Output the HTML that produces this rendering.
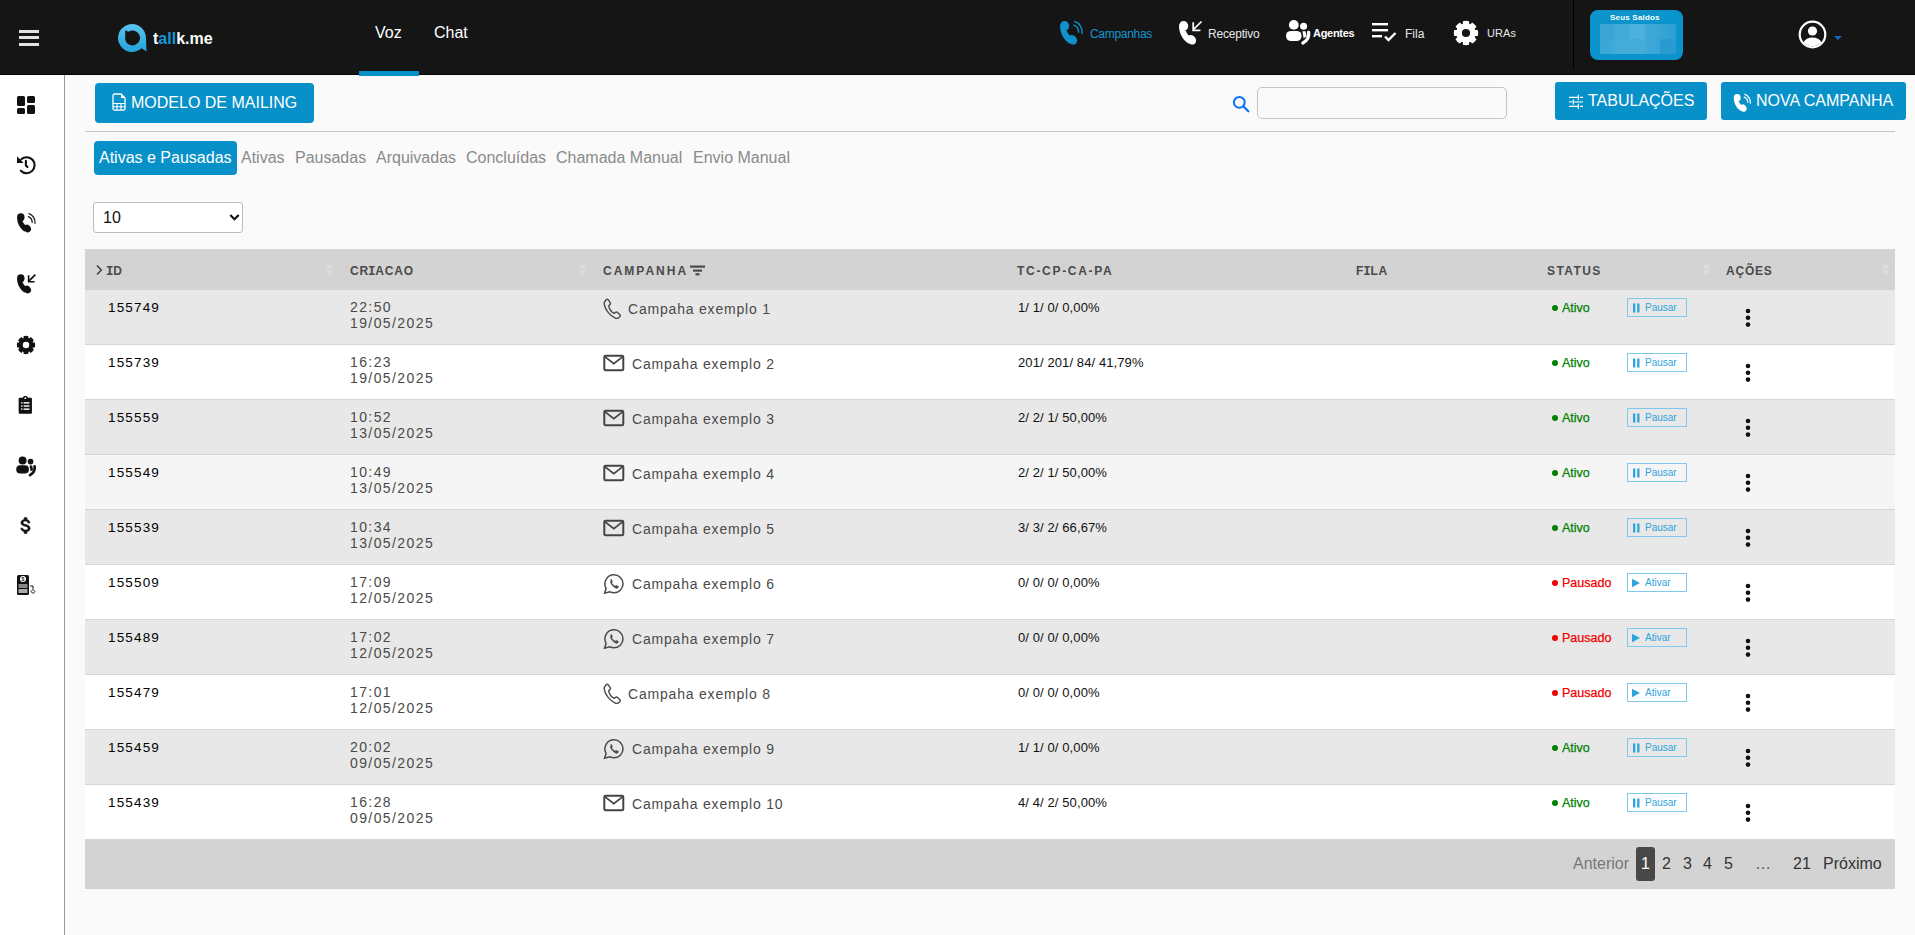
<!DOCTYPE html>
<html><head><meta charset="utf-8">
<style>
*{box-sizing:border-box;margin:0;padding:0}
html,body{width:1915px;height:935px;overflow:hidden;background:#fafafa;font-family:"Liberation Sans",sans-serif}
.abs{position:absolute}
#top{position:absolute;left:0;top:0;width:1915px;height:75px;background:#151515;border-bottom:1px solid #050505}
#side{position:absolute;left:0;top:75px;width:65px;height:860px;background:#fff;border-right:1px solid #9a9a9a}
.txt{position:absolute;white-space:nowrap;line-height:1}
.btn{position:absolute;background:#0891c9;border-radius:4px;color:#fff}
svg{display:block}
.hd{font-size:12px;font-weight:bold;color:#4a4a4a;letter-spacing:0.8px}
.hd i{font-style:normal;font-family:'Liberation Mono',monospace;font-size:12.5px;margin:0 -1px 0 -1px}
.idt{font-size:13.5px;color:#000;letter-spacing:1.15px}
.dt{font-size:14px;color:#4a4a4a;letter-spacing:1.4px;line-height:16px}
.cp{font-size:14px;color:#4a4a4a;letter-spacing:0.8px}
.tc{font-size:13px;color:#111;letter-spacing:0.1px}
.st{font-size:12.5px;-webkit-text-stroke:0.25px currentColor}
.pb{font-size:10px;color:#2fa3dc}
.pg{font-size:16px}
</style></head><body>
<div id="top">
  <!-- hamburger -->
  <div class="abs" style="left:19px;top:30px;width:20px;height:3px;background:#e2e2e2"></div>
  <div class="abs" style="left:19px;top:36px;width:20px;height:3px;background:#e2e2e2"></div>
  <div class="abs" style="left:19px;top:43px;width:20px;height:3px;background:#e2e2e2"></div>
  <!-- logo -->
  <svg class="abs" style="left:117px;top:23px" width="31" height="30" viewBox="0 0 31 30">
    <defs><linearGradient id="lg" x1="0" y1="0" x2="0" y2="1"><stop offset="0" stop-color="#5cc3ee"/><stop offset="1" stop-color="#23a3dc"/></linearGradient></defs>
    <path d="M15 1 A14 14 0 1 0 24.5 25.3 L29.5 28.5 L29 14.5 A14 14 0 0 0 15 1 Z M8.300 7.300 L11.500 8.660 A7.500 7.500 0 1 1 8.200 16.700 Z" fill="url(#lg)" fill-rule="evenodd"/>
  </svg>
  <div class="txt" style="left:153px;top:31px;font-size:16px;font-weight:bold;color:#fff;letter-spacing:0px">t<span style="color:#1598d4">all</span>k.me</div>
  <!-- Voz / Chat -->
  <div class="txt" style="left:375px;top:25px;font-size:16px;color:#fff">Voz</div>
  <div class="abs" style="left:359px;top:71px;width:60px;height:5px;background:#0891c9"></div>
  <div class="txt" style="left:434px;top:25px;font-size:16px;color:#fff">Chat</div>

  <!-- right nav -->
  <svg class="abs" style="left:1055px;top:17px" width="32" height="32" viewBox="0 0 32 32"><g fill="#0f92cc"><ellipse cx="9.600" cy="9" rx="4.600" ry="5.100"/><ellipse cx="17.600" cy="22.800" rx="4.200" ry="5" transform="rotate(-35 17.600 22.800)"/><path d="M5.200 10C5 16 8.500 22.500 14.500 26.800L16.300 19.200C14.500 18.500 12.900 16.800 12.100 14.200Z"/></g><path fill="none" stroke="#0f92cc" stroke-width="1.3" d="M18.400 7.800A8 8 0 0 1 23.600 15.800M19.200 4.200A11.500 11.500 0 0 1 27 17"/></svg>
  <div class="txt" style="left:1090px;top:28px;font-size:12px;color:#1595cf;letter-spacing:-0.3px">Campanhas</div>
  <svg class="abs" style="left:1174px;top:17px" width="32" height="32" viewBox="0 0 32 32"><g fill="#fff"><ellipse cx="9.600" cy="9" rx="4.600" ry="5.100"/><ellipse cx="17.600" cy="22.800" rx="4.200" ry="5" transform="rotate(-35 17.600 22.800)"/><path d="M5.200 10C5 16 8.500 22.500 14.500 26.800L16.300 19.200C14.500 18.500 12.900 16.800 12.100 14.200Z"/></g><path fill="none" stroke="#fff" stroke-width="1.7" d="M27.500 4.500L19.800 12.200"/><path fill="none" stroke="#fff" stroke-width="1.7" stroke-linecap="square" d="M19.200 6.200V13.300H25.600"/></svg>
  <div class="txt" style="left:1208px;top:28px;font-size:12px;color:#e8e8e8;letter-spacing:-0.2px">Receptivo</div>
  <svg class="abs" style="left:1282px;top:17px" width="32" height="32" viewBox="0 0 32 32"><circle cx="11.800" cy="7.900" r="4.900" fill="#fff"/><circle cx="21.600" cy="9.300" r="3.500" fill="#fff"/><rect x="4" y="13.900" width="15.600" height="10.200" rx="5" fill="#fff"/><path d="M26.600 15.300Q27.600 22.300 20.900 26" fill="none" stroke="#fff" stroke-width="3.300" stroke-linecap="round"/><path d="M20.400 14.300L23.600 14.300L24.700 19.600L21.600 21.300Z" fill="#fff"/></svg>
  <div class="txt" style="left:1313px;top:28px;font-size:11px;color:#fff;font-weight:bold;letter-spacing:-0.3px">Agentes</div>
  <svg class="abs" style="left:1372px;top:23px" width="26" height="19" viewBox="0 0 26 19"><rect x="0" y="0" width="16" height="2.400" fill="#fff"/><rect x="0" y="6" width="16" height="2.400" fill="#fff"/><rect x="0" y="12" width="10" height="2.400" fill="#fff"/><path fill="none" stroke="#fff" stroke-width="2.400" d="M13 13.500l3.500 3.500 7-7"/></svg>
  <div class="txt" style="left:1405px;top:28px;font-size:12px;color:#e8e8e8">Fila</div>
  <svg class="abs" style="left:1450px;top:17px" width="32" height="32" viewBox="0 0 32 32"><path fill="#fff" fill-rule="evenodd" d="M12.90 6.70L12.90 4.20A12.20 12.20 0 0 1 19.10 4.20L19.10 6.70A9.80 9.80 0 0 1 20.38 7.23L20.38 7.23L22.15 5.46A12.20 12.20 0 0 1 26.54 9.85L24.77 11.62A9.80 9.80 0 0 1 25.30 12.90L25.30 12.90L27.80 12.90A12.20 12.20 0 0 1 27.80 19.10L25.30 19.10A9.80 9.80 0 0 1 24.77 20.38L24.77 20.38L26.54 22.15A12.20 12.20 0 0 1 22.15 26.54L20.38 24.77A9.80 9.80 0 0 1 19.10 25.30L19.10 25.30L19.10 27.80A12.20 12.20 0 0 1 12.90 27.80L12.90 25.30A9.80 9.80 0 0 1 11.62 24.77L11.62 24.77L9.85 26.54A12.20 12.20 0 0 1 5.46 22.15L7.23 20.38A9.80 9.80 0 0 1 6.70 19.10L6.70 19.10L4.20 19.10A12.20 12.20 0 0 1 4.20 12.90L6.70 12.90A9.80 9.80 0 0 1 7.23 11.62L7.23 11.62L5.46 9.85A12.20 12.20 0 0 1 9.85 5.46L11.62 7.23A9.80 9.80 0 0 1 12.90 6.70ZM16.00 11.90A4.10 4.10 0 1 0 16.00 20.10A4.10 4.10 0 1 0 16.00 11.90Z"/></svg>
  <div class="txt" style="left:1487px;top:28px;font-size:11px;color:#e8e8e8;letter-spacing:0.1px">URAs</div>
  <div class="abs" style="left:1573px;top:0;width:1px;height:70px;background:#000"></div>
  <!-- saldos -->
  <div class="abs" style="left:1590px;top:10px;width:93px;height:50px;background:#0b93cb;border-radius:8px;overflow:hidden">
    <div class="txt" style="left:20px;top:4px;font-size:8px;font-weight:bold;color:#fff;letter-spacing:0.2px">Seus&nbsp;Saldos</div>
    <div class="abs" style="left:10px;top:14px;width:76px;height:30px;background:linear-gradient(90deg,#3aa6d6 0%,#45acd9 40%,#3ba7d7 70%,#2d9dd2 100%)"></div>
    <div class="abs" style="left:10px;top:14px;width:15px;height:15px;background:#3ba6d6"></div>
    <div class="abs" style="left:40px;top:14px;width:15px;height:15px;background:#4cb1dc"></div>
    <div class="abs" style="left:25px;top:29px;width:30px;height:15px;background:#45acd9"></div>
    <div class="abs" style="left:70px;top:29px;width:16px;height:15px;background:#2a9bd1"></div>
  </div>
  <!-- user -->
  <svg class="abs" style="left:1798px;top:20px" width="29" height="29" viewBox="0 0 29 29"><circle cx="14.500" cy="14.500" r="12.800" fill="#151515" stroke="#fff" stroke-width="2.200"/><circle cx="14.500" cy="11" r="4.600" fill="#fff"/><path fill="#fff" d="M5.500 22.500c1.500-3.300 5-5 9-5s7.500 1.700 9 5c-2.300 2.300-5.500 3.700-9 3.700s-6.700-1.400-9-3.700z"/></svg>
  <div class="abs" style="left:1834px;top:36px;width:0;height:0;border-left:4px solid transparent;border-right:4px solid transparent;border-top:4px solid #1565c0"></div>
</div>
<div id="side">
  <svg class="abs" style="left:15px;top:19px" width="22" height="22" viewBox="0 0 22 22"><rect x="2" y="2" width="8" height="10" rx="1.500" fill="#111"/><rect x="12" y="2" width="8" height="7" rx="1.500" fill="#111"/><rect x="2" y="14" width="8" height="6" rx="1.500" fill="#111"/><rect x="12" y="11" width="8" height="9" rx="1.500" fill="#111"/></svg>
  <svg class="abs" style="left:10px;top:75px" width="32" height="32" viewBox="0 0 32 32"><path d="M11.300 9.200A8 8 0 1 1 10.800 20.700" fill="none" stroke="#111" stroke-width="2.100" stroke-linecap="round"/><path d="M7 6.300L13 12.200V12.900H7Z" fill="#111"/><path d="M15.900 10.900V15.600L17.500 17" fill="none" stroke="#111" stroke-width="2.100" stroke-linecap="round" stroke-linejoin="round"/></svg>
  <svg class="abs" style="left:13px;top:135px" width="26" height="26" viewBox="0 0 32 32"><g fill="#111"><ellipse cx="9.600" cy="9" rx="4.600" ry="5.100"/><ellipse cx="17.600" cy="22.800" rx="4.200" ry="5" transform="rotate(-35 17.600 22.800)"/><path d="M5.200 10C5 16 8.500 22.500 14.500 26.800L16.300 19.200C14.500 18.500 12.900 16.800 12.100 14.200Z"/></g><path fill="none" stroke="#111" stroke-width="1.5" d="M18.400 7.800A8 8 0 0 1 23.600 15.800M19.200 4.200A11.500 11.500 0 0 1 27 17"/></svg>
  <svg class="abs" style="left:13px;top:196px" width="26" height="26" viewBox="0 0 32 32"><g fill="#111"><ellipse cx="9.600" cy="9" rx="4.600" ry="5.100"/><ellipse cx="17.600" cy="22.800" rx="4.200" ry="5" transform="rotate(-35 17.600 22.800)"/><path d="M5.200 10C5 16 8.500 22.500 14.500 26.800L16.300 19.200C14.500 18.500 12.900 16.800 12.100 14.200Z"/></g><path fill="none" stroke="#111" stroke-width="2" d="M27.500 4.500L19.800 12.200"/><path fill="none" stroke="#111" stroke-width="2" stroke-linecap="square" d="M19.200 6.200V13.300H25.600"/></svg>
  <svg class="abs" style="left:14px;top:258px" width="24" height="24" viewBox="0 0 32 32"><path fill="#111" fill-rule="evenodd" d="M12.80 6.74L12.80 4.23A12.20 12.20 0 0 1 19.20 4.23L19.20 6.74A9.80 9.80 0 0 1 20.29 7.19L20.29 7.19L22.06 5.41A12.20 12.20 0 0 1 26.59 9.94L24.81 11.71A9.80 9.80 0 0 1 25.26 12.80L25.26 12.80L27.77 12.80A12.20 12.20 0 0 1 27.77 19.20L25.26 19.20A9.80 9.80 0 0 1 24.81 20.29L24.81 20.29L26.59 22.06A12.20 12.20 0 0 1 22.06 26.59L20.29 24.81A9.80 9.80 0 0 1 19.20 25.26L19.20 25.26L19.20 27.77A12.20 12.20 0 0 1 12.80 27.77L12.80 25.26A9.80 9.80 0 0 1 11.71 24.81L11.71 24.81L9.94 26.59A12.20 12.20 0 0 1 5.41 22.06L7.19 20.29A9.80 9.80 0 0 1 6.74 19.20L6.74 19.20L4.23 19.20A12.20 12.20 0 0 1 4.23 12.80L6.74 12.80A9.80 9.80 0 0 1 7.19 11.71L7.19 11.71L5.41 9.94A12.20 12.20 0 0 1 9.94 5.41L11.71 7.19A9.80 9.80 0 0 1 12.80 6.74ZM16.00 11.70A4.30 4.30 0 1 0 16.00 20.30A4.30 4.30 0 1 0 16.00 11.70Z"/></svg>
  <svg class="abs" style="left:17.400px;top:320px" width="16.600" height="19.700" viewBox="0 0 20 22" preserveAspectRatio="none"><path fill="#111" d="M3.500 3h3.200C7.200 1.700 8.500 1 10 1s2.800.7 3.300 2h3.200c.9 0 1.500.6 1.500 1.500v15c0 .9-.6 1.500-1.500 1.500h-13c-.9 0-1.500-.6-1.500-1.500v-15C2 3.600 2.600 3 3.500 3z"/><circle cx="10" cy="3.500" r="1.100" fill="#fff"/><g fill="#fff"><rect x="5" y="8" width="1.600" height="1.600"/><rect x="8" y="8" width="7" height="1.600"/><rect x="5" y="11.500" width="1.600" height="1.600"/><rect x="8" y="11.500" width="7" height="1.600"/><rect x="5" y="15" width="1.600" height="1.600"/><rect x="8" y="15" width="7" height="1.600"/></g></svg>
  <svg class="abs" style="left:13px;top:379px" width="26" height="26" viewBox="0 0 32 32"><circle cx="11.800" cy="7.900" r="4.900" fill="#111"/><circle cx="21.600" cy="9.300" r="3.500" fill="#111"/><rect x="4" y="13.900" width="15.600" height="10.200" rx="5" fill="#111"/><path d="M26.600 15.300Q27.600 22.300 20.900 26" fill="none" stroke="#111" stroke-width="3.300" stroke-linecap="round"/><path d="M20.400 14.300L23.600 14.300L24.700 19.600L21.600 21.300Z" fill="#111"/></svg>
  <svg class="abs" style="left:15px;top:440px" width="22" height="21" viewBox="0 0 24 24" preserveAspectRatio="none"><path fill="#111" stroke="#111" stroke-width="0.700" d="M11.800 10.900c-2.270-.590-3-1.200-3-2.150 0-1.090 1.010-1.850 2.700-1.850 1.780 0 2.440.850 2.500 2.100h2.210c-.070-1.720-1.120-3.300-3.210-3.810V3h-3v2.160c-1.940.420-3.500 1.680-3.500 3.610 0 2.310 1.910 3.460 4.700 4.130 2.500.600 3 1.480 3 2.410 0 .690-.490 1.790-2.700 1.790-2.060 0-2.870-.920-2.980-2.100h-2.200c.120 2.190 1.760 3.420 3.680 3.830V21h3v-2.150c1.950-.370 3.500-1.500 3.500-3.550 0-2.840-2.430-3.810-4.700-4.400z"/></svg>
  <svg class="abs" style="left:16px;top:499px" width="21" height="22" viewBox="0 0 21 22"><rect x="1" y="1" width="12" height="20" rx="1.500" fill="#111"/><circle cx="7" cy="5" r="3" fill="#fff"/><text x="7" y="7" font-size="5" text-anchor="middle" fill="#111" font-family="Liberation Sans" font-weight="bold">$</text><rect x="2.500" y="10" width="9" height="4" fill="#888"/><rect x="2.500" y="15" width="9" height="4" fill="#aaa"/><path fill="none" stroke="#111" stroke-width="1" d="M14 12h3v3"/><path fill="none" stroke="#111" stroke-width="1" d="M17 15.500l2 2-2 2-2-2z"/></svg>
</div>

<!-- toolbar -->
<div class="btn" style="left:95px;top:83px;width:219px;height:40px">
  <svg class="abs" style="left:17px;top:10px" width="14" height="18" viewBox="0 0 14 18"><path fill="none" stroke="#fff" stroke-width="1.300" d="M2.500 1h6.500l4 4v10.500c0 .9-.7 1.600-1.600 1.600H2.600c-.9 0-1.600-.7-1.600-1.600V2.600C1 1.700 1.700 1 2.500 1z"/><path fill="#fff" d="M9 1v4h4z"/><path fill="none" stroke="#fff" stroke-width="1.100" d="M1 10.500h12M1 13.800h12M5 10.500v6.600M9 10.500v6.600"/></svg>
  <div class="txt" style="left:36px;top:12px;font-size:16px;color:#fff">MODELO DE MAILING</div>
</div>
<svg class="abs" style="left:1232px;top:95px" width="19" height="19" viewBox="0 0 19 19"><circle cx="7.300" cy="7.300" r="5.400" fill="none" stroke="#0b6ffb" stroke-width="2"/><path d="M11.300 11.300l5 5" stroke="#0b6ffb" stroke-width="2.200" stroke-linecap="round"/></svg>
<div class="abs" style="left:1257px;top:87px;width:250px;height:32px;background:#fafafa;border:1px solid #c4c4c4;border-radius:5px"></div>
<div class="btn" style="left:1555px;top:82px;width:152px;height:38px;border-radius:3px">
  <svg class="abs" style="left:0;top:0" width="40" height="38" viewBox="0 0 40 38"><g stroke="#fff" stroke-width="1.200" fill="none"><path d="M14 15.400H23.400M25 15.400H28M23.400 12.800V18"/><path d="M14 24.400H23.400M25 24.400H28M23.400 21.800V27"/><path d="M18.400 17.400V22.400"/></g><path d="M14 19.900H17.600M19.300 19.900H28" stroke="#fff" stroke-opacity="0.6" stroke-width="1.800"/></svg>
  <div class="txt" style="left:33px;top:11px;font-size:16px;color:#fff">TABULAÇÕES</div>
</div>
<div class="btn" style="left:1721px;top:82px;width:185px;height:38px;border-radius:3px">
  <svg class="abs" style="left:9px;top:9px" width="24" height="24" viewBox="0 0 32 32"><g fill="#fff"><ellipse cx="9.600" cy="9" rx="4.600" ry="5.100"/><ellipse cx="17.600" cy="22.800" rx="4.200" ry="5" transform="rotate(-35 17.600 22.800)"/><path d="M5.200 10C5 16 8.500 22.500 14.500 26.800L16.300 19.200C14.500 18.500 12.900 16.800 12.100 14.200Z"/></g><path fill="none" stroke="#fff" stroke-width="1.6" d="M18.400 7.800A8 8 0 0 1 23.600 15.800M19.200 4.200A11.500 11.500 0 0 1 27 17"/></svg>
  <div class="txt" style="left:35px;top:11px;font-size:16px;color:#fff">NOVA CAMPANHA</div>
</div>
<div class="abs" style="left:85px;top:131px;width:1810px;height:1px;background:#c4c4c4"></div>
<!-- tabs -->
<div class="abs" style="left:94px;top:141px;width:143px;height:34px;background:#0891c9;border-radius:4px"></div>
<div class="txt" style="left:99px;top:150px;font-size:16px;color:#fff">Ativas e Pausadas</div>
<div class="txt" style="left:241px;top:150px;font-size:16px;color:#8a8a8a">Ativas</div>
<div class="txt" style="left:295px;top:150px;font-size:16px;color:#8a8a8a">Pausadas</div>
<div class="txt" style="left:376px;top:150px;font-size:16px;color:#8a8a8a">Arquivadas</div>
<div class="txt" style="left:466px;top:150px;font-size:16px;color:#8a8a8a">Concluídas</div>
<div class="txt" style="left:556px;top:150px;font-size:16px;color:#8a8a8a">Chamada Manual</div>
<div class="txt" style="left:693px;top:150px;font-size:16px;color:#8a8a8a">Envio Manual</div>
<!-- select -->
<div class="abs" style="left:93px;top:202px;width:150px;height:31px;background:#fff;border:1px solid #bdbdbd;border-radius:3px"></div>
<div class="txt" style="left:103px;top:210px;font-size:16px;color:#111">10</div>
<svg class="abs" style="left:229px;top:213px" width="11" height="9" viewBox="0 0 11 9"><path d="M1.300 2L5.500 6.200 9.700 2" fill="none" stroke="#111" stroke-width="2.200"/></svg>
<!-- TABLE -->
<div class="abs" style="left:85px;top:249px;width:1810px;height:41px;background:#d3d3d3"></div>
<div class="txt hd" style="left:107px;top:265px;letter-spacing:0.8px"><i>I</i>D</div>
<div class="txt hd" style="left:350px;top:265px;letter-spacing:0.8px">CR<i>I</i>ACAO</div>
<div class="txt hd" style="left:603px;top:265px;letter-spacing:2.0px">CAMPANHA</div>
<div class="txt hd" style="left:1017px;top:265px;letter-spacing:1.7px">TC-CP-CA-PA</div>
<div class="txt hd" style="left:1356px;top:265px;letter-spacing:0.8px">F<i>I</i>LA</div>
<div class="txt hd" style="left:1547px;top:265px;letter-spacing:1.4px">STATUS</div>
<div class="txt hd" style="left:1726px;top:265px;letter-spacing:0.8px">AÇÕES</div>
<svg class="abs" style="left:95px;top:264px" width="8" height="12" viewBox="0 0 8 12"><path d="M2 1.500l4.300 4.500L2 10.500" fill="none" stroke="#444" stroke-width="1.600"/></svg>
<svg class="abs" style="left:689px;top:264px" width="18" height="12" viewBox="0 0 18 12"><rect x="1" y="1.500" width="15" height="2.200" fill="#4a4a4a"/><rect x="4" y="5.500" width="9" height="2.200" fill="#4a4a4a"/><rect x="6.500" y="9.200" width="4" height="2.200" fill="#4a4a4a"/></svg>
<svg class="abs" style="left:325px;top:262px" width="9" height="15" viewBox="0 0 9 15"><path d="M4.500 1L8.500 6.800H.5z M4.500 14L8.500 8.200H.5z" fill="#dcdcdc"/></svg>
<svg class="abs" style="left:578px;top:262px" width="9" height="15" viewBox="0 0 9 15"><path d="M4.500 1L8.500 6.800H.5z M4.500 14L8.500 8.200H.5z" fill="#dcdcdc"/></svg>
<svg class="abs" style="left:1702px;top:262px" width="9" height="15" viewBox="0 0 9 15"><path d="M4.500 1L8.500 6.800H.5z M4.500 14L8.500 8.200H.5z" fill="#dcdcdc"/></svg>
<svg class="abs" style="left:1881px;top:262px" width="9" height="15" viewBox="0 0 9 15"><path d="M4.500 1L8.500 6.800H.5z M4.500 14L8.500 8.200H.5z" fill="#dcdcdc"/></svg>
<div class="abs" style="left:85px;top:290px;width:1810px;height:55px;background:#e8e8e8;border-bottom:1px solid #d6d6d6"></div>
<div class="txt idt" style="left:108px;top:301px">155749</div>
<div class="txt dt" style="left:350px;top:299px">22:50<br>19/05/2025</div>
<svg class="abs" style="left:603px;top:298px" width="18" height="21" viewBox="0 0 18 21"><path fill="none" stroke="#4a4a4a" stroke-width="1.400" stroke-linejoin="round" d="M3.200 1.600c.7-.5 1.600-.4 2.100.3l1.900 2.800c.4.6.3 1.400-.2 1.900L5.700 7.800c.5 2.800 2.600 6 5.300 7.600l1.600-1.100c.6-.4 1.400-.4 1.900.1l2.200 2.200c.6.6.6 1.500 0 2.100l-1.100 1c-.9.8-2.200 1-3.300.5C7 17.900 2.200 11.800 1.200 6.100 1 5 1.400 3.800 2.300 3z"/></svg>
<div class="txt cp" style="left:628px;top:302px">Campaha exemplo 1</div>
<div class="txt tc" style="left:1018px;top:301px">1/ 1/ 0/ 0,00%</div>
<div class="abs" style="left:1552px;top:305px;width:6px;height:6px;border-radius:50%;background:#008000"></div>
<div class="txt st" style="left:1562px;top:302px;color:#008000">Ativo</div>
<div class="abs" style="left:1627px;top:298px;width:60px;height:19px;border:1px solid #80c9ee"><svg class="abs" style="left:4px;top:4px" width="9" height="10" viewBox="0 0 9 10"><rect x="1" y="0.500" width="2.300" height="9" fill="#2fa3dc"/><rect x="5.200" y="0.500" width="2.300" height="9" fill="#2fa3dc"/></svg><div class="txt pb" style="left:17px;top:4px">Pausar</div></div>
<svg class="abs" style="left:1744px;top:308px" width="8" height="20" viewBox="0 0 8 20"><circle cx="4" cy="3" r="2.300" fill="#111"/><circle cx="4" cy="9.800" r="2.300" fill="#111"/><circle cx="4" cy="16.600" r="2.300" fill="#111"/></svg>
<div class="abs" style="left:85px;top:345px;width:1810px;height:55px;background:#ffffff;border-bottom:1px solid #d6d6d6"></div>
<div class="txt idt" style="left:108px;top:356px">155739</div>
<div class="txt dt" style="left:350px;top:354px">16:23<br>19/05/2025</div>
<svg class="abs" style="left:603px;top:354px" width="22" height="18" viewBox="0 0 22 18"><rect x="1.300" y="1.800" width="19" height="14.500" rx="1.300" fill="none" stroke="#444" stroke-width="2"/><path d="M1.800 2.600l9 7 9-7" fill="none" stroke="#444" stroke-width="1.800"/></svg>
<div class="txt cp" style="left:632px;top:357px">Campaha exemplo 2</div>
<div class="txt tc" style="left:1018px;top:356px">201/ 201/ 84/ 41,79%</div>
<div class="abs" style="left:1552px;top:360px;width:6px;height:6px;border-radius:50%;background:#008000"></div>
<div class="txt st" style="left:1562px;top:357px;color:#008000">Ativo</div>
<div class="abs" style="left:1627px;top:353px;width:60px;height:19px;border:1px solid #80c9ee"><svg class="abs" style="left:4px;top:4px" width="9" height="10" viewBox="0 0 9 10"><rect x="1" y="0.500" width="2.300" height="9" fill="#2fa3dc"/><rect x="5.200" y="0.500" width="2.300" height="9" fill="#2fa3dc"/></svg><div class="txt pb" style="left:17px;top:4px">Pausar</div></div>
<svg class="abs" style="left:1744px;top:363px" width="8" height="20" viewBox="0 0 8 20"><circle cx="4" cy="3" r="2.300" fill="#111"/><circle cx="4" cy="9.800" r="2.300" fill="#111"/><circle cx="4" cy="16.600" r="2.300" fill="#111"/></svg>
<div class="abs" style="left:85px;top:400px;width:1810px;height:55px;background:#e8e8e8;border-bottom:1px solid #d6d6d6"></div>
<div class="txt idt" style="left:108px;top:411px">155559</div>
<div class="txt dt" style="left:350px;top:409px">10:52<br>13/05/2025</div>
<svg class="abs" style="left:603px;top:409px" width="22" height="18" viewBox="0 0 22 18"><rect x="1.300" y="1.800" width="19" height="14.500" rx="1.300" fill="none" stroke="#444" stroke-width="2"/><path d="M1.800 2.600l9 7 9-7" fill="none" stroke="#444" stroke-width="1.800"/></svg>
<div class="txt cp" style="left:632px;top:412px">Campaha exemplo 3</div>
<div class="txt tc" style="left:1018px;top:411px">2/ 2/ 1/ 50,00%</div>
<div class="abs" style="left:1552px;top:415px;width:6px;height:6px;border-radius:50%;background:#008000"></div>
<div class="txt st" style="left:1562px;top:412px;color:#008000">Ativo</div>
<div class="abs" style="left:1627px;top:408px;width:60px;height:19px;border:1px solid #80c9ee"><svg class="abs" style="left:4px;top:4px" width="9" height="10" viewBox="0 0 9 10"><rect x="1" y="0.500" width="2.300" height="9" fill="#2fa3dc"/><rect x="5.200" y="0.500" width="2.300" height="9" fill="#2fa3dc"/></svg><div class="txt pb" style="left:17px;top:4px">Pausar</div></div>
<svg class="abs" style="left:1744px;top:418px" width="8" height="20" viewBox="0 0 8 20"><circle cx="4" cy="3" r="2.300" fill="#111"/><circle cx="4" cy="9.800" r="2.300" fill="#111"/><circle cx="4" cy="16.600" r="2.300" fill="#111"/></svg>
<div class="abs" style="left:85px;top:455px;width:1810px;height:55px;background:#f5f5f5;border-bottom:1px solid #d6d6d6"></div>
<div class="txt idt" style="left:108px;top:466px">155549</div>
<div class="txt dt" style="left:350px;top:464px">10:49<br>13/05/2025</div>
<svg class="abs" style="left:603px;top:464px" width="22" height="18" viewBox="0 0 22 18"><rect x="1.300" y="1.800" width="19" height="14.500" rx="1.300" fill="none" stroke="#444" stroke-width="2"/><path d="M1.800 2.600l9 7 9-7" fill="none" stroke="#444" stroke-width="1.800"/></svg>
<div class="txt cp" style="left:632px;top:467px">Campaha exemplo 4</div>
<div class="txt tc" style="left:1018px;top:466px">2/ 2/ 1/ 50,00%</div>
<div class="abs" style="left:1552px;top:470px;width:6px;height:6px;border-radius:50%;background:#008000"></div>
<div class="txt st" style="left:1562px;top:467px;color:#008000">Ativo</div>
<div class="abs" style="left:1627px;top:463px;width:60px;height:19px;border:1px solid #80c9ee"><svg class="abs" style="left:4px;top:4px" width="9" height="10" viewBox="0 0 9 10"><rect x="1" y="0.500" width="2.300" height="9" fill="#2fa3dc"/><rect x="5.200" y="0.500" width="2.300" height="9" fill="#2fa3dc"/></svg><div class="txt pb" style="left:17px;top:4px">Pausar</div></div>
<svg class="abs" style="left:1744px;top:473px" width="8" height="20" viewBox="0 0 8 20"><circle cx="4" cy="3" r="2.300" fill="#111"/><circle cx="4" cy="9.800" r="2.300" fill="#111"/><circle cx="4" cy="16.600" r="2.300" fill="#111"/></svg>
<div class="abs" style="left:85px;top:510px;width:1810px;height:55px;background:#e8e8e8;border-bottom:1px solid #d6d6d6"></div>
<div class="txt idt" style="left:108px;top:521px">155539</div>
<div class="txt dt" style="left:350px;top:519px">10:34<br>13/05/2025</div>
<svg class="abs" style="left:603px;top:519px" width="22" height="18" viewBox="0 0 22 18"><rect x="1.300" y="1.800" width="19" height="14.500" rx="1.300" fill="none" stroke="#444" stroke-width="2"/><path d="M1.800 2.600l9 7 9-7" fill="none" stroke="#444" stroke-width="1.800"/></svg>
<div class="txt cp" style="left:632px;top:522px">Campaha exemplo 5</div>
<div class="txt tc" style="left:1018px;top:521px">3/ 3/ 2/ 66,67%</div>
<div class="abs" style="left:1552px;top:525px;width:6px;height:6px;border-radius:50%;background:#008000"></div>
<div class="txt st" style="left:1562px;top:522px;color:#008000">Ativo</div>
<div class="abs" style="left:1627px;top:518px;width:60px;height:19px;border:1px solid #80c9ee"><svg class="abs" style="left:4px;top:4px" width="9" height="10" viewBox="0 0 9 10"><rect x="1" y="0.500" width="2.300" height="9" fill="#2fa3dc"/><rect x="5.200" y="0.500" width="2.300" height="9" fill="#2fa3dc"/></svg><div class="txt pb" style="left:17px;top:4px">Pausar</div></div>
<svg class="abs" style="left:1744px;top:528px" width="8" height="20" viewBox="0 0 8 20"><circle cx="4" cy="3" r="2.300" fill="#111"/><circle cx="4" cy="9.800" r="2.300" fill="#111"/><circle cx="4" cy="16.600" r="2.300" fill="#111"/></svg>
<div class="abs" style="left:85px;top:565px;width:1810px;height:55px;background:#ffffff;border-bottom:1px solid #d6d6d6"></div>
<div class="txt idt" style="left:108px;top:576px">155509</div>
<div class="txt dt" style="left:350px;top:574px">17:09<br>12/05/2025</div>
<svg class="abs" style="left:603px;top:573px" width="22" height="22" viewBox="0 0 22 22"><path fill="none" stroke="#4a4a4a" stroke-width="1.500" d="M11 1.800a9 9 0 0 1 0 18 9 9 0 0 1-4.300-1.100L1.600 20.200l1.500-4.900A9 9 0 0 1 11 1.800z"/><path fill="#4a4a4a" d="M7.600 6.300c.4-.3.900-.3 1.100.1l.9 1.800c.2.400.1.800-.2 1.100l-.5.500c.7 1.400 1.800 2.500 3.200 3.200l.5-.5c.3-.3.700-.4 1.100-.2l1.800.9c.4.2.4.700.1 1.100l-.7.800c-.5.500-1.300.700-2 .4C10.700 14.500 8.300 12.100 7.300 9.800c-.3-.7-.1-1.500.4-2z"/></svg>
<div class="txt cp" style="left:632px;top:577px">Campaha exemplo 6</div>
<div class="txt tc" style="left:1018px;top:576px">0/ 0/ 0/ 0,00%</div>
<div class="abs" style="left:1552px;top:580px;width:6px;height:6px;border-radius:50%;background:#f00000"></div>
<div class="txt st" style="left:1562px;top:577px;color:#f00000">Pausado</div>
<div class="abs" style="left:1627px;top:573px;width:60px;height:19px;border:1px solid #80c9ee"><svg class="abs" style="left:3px;top:4px" width="10" height="10" viewBox="0 0 10 10"><path d="M1 .800L9 5 1 9.200z" fill="#2fa3dc"/></svg><div class="txt pb" style="left:17px;top:4px">Ativar</div></div>
<svg class="abs" style="left:1744px;top:583px" width="8" height="20" viewBox="0 0 8 20"><circle cx="4" cy="3" r="2.300" fill="#111"/><circle cx="4" cy="9.800" r="2.300" fill="#111"/><circle cx="4" cy="16.600" r="2.300" fill="#111"/></svg>
<div class="abs" style="left:85px;top:620px;width:1810px;height:55px;background:#e8e8e8;border-bottom:1px solid #d6d6d6"></div>
<div class="txt idt" style="left:108px;top:631px">155489</div>
<div class="txt dt" style="left:350px;top:629px">17:02<br>12/05/2025</div>
<svg class="abs" style="left:603px;top:628px" width="22" height="22" viewBox="0 0 22 22"><path fill="none" stroke="#4a4a4a" stroke-width="1.500" d="M11 1.800a9 9 0 0 1 0 18 9 9 0 0 1-4.300-1.100L1.600 20.200l1.500-4.900A9 9 0 0 1 11 1.800z"/><path fill="#4a4a4a" d="M7.600 6.300c.4-.3.900-.3 1.100.1l.9 1.800c.2.400.1.800-.2 1.100l-.5.500c.7 1.400 1.800 2.500 3.200 3.200l.5-.5c.3-.3.700-.4 1.100-.2l1.800.9c.4.2.4.700.1 1.100l-.7.800c-.5.500-1.300.700-2 .4C10.700 14.500 8.300 12.100 7.300 9.800c-.3-.7-.1-1.500.4-2z"/></svg>
<div class="txt cp" style="left:632px;top:632px">Campaha exemplo 7</div>
<div class="txt tc" style="left:1018px;top:631px">0/ 0/ 0/ 0,00%</div>
<div class="abs" style="left:1552px;top:635px;width:6px;height:6px;border-radius:50%;background:#f00000"></div>
<div class="txt st" style="left:1562px;top:632px;color:#f00000">Pausado</div>
<div class="abs" style="left:1627px;top:628px;width:60px;height:19px;border:1px solid #80c9ee"><svg class="abs" style="left:3px;top:4px" width="10" height="10" viewBox="0 0 10 10"><path d="M1 .800L9 5 1 9.200z" fill="#2fa3dc"/></svg><div class="txt pb" style="left:17px;top:4px">Ativar</div></div>
<svg class="abs" style="left:1744px;top:638px" width="8" height="20" viewBox="0 0 8 20"><circle cx="4" cy="3" r="2.300" fill="#111"/><circle cx="4" cy="9.800" r="2.300" fill="#111"/><circle cx="4" cy="16.600" r="2.300" fill="#111"/></svg>
<div class="abs" style="left:85px;top:675px;width:1810px;height:55px;background:#ffffff;border-bottom:1px solid #d6d6d6"></div>
<div class="txt idt" style="left:108px;top:686px">155479</div>
<div class="txt dt" style="left:350px;top:684px">17:01<br>12/05/2025</div>
<svg class="abs" style="left:603px;top:683px" width="18" height="21" viewBox="0 0 18 21"><path fill="none" stroke="#4a4a4a" stroke-width="1.400" stroke-linejoin="round" d="M3.200 1.600c.7-.5 1.600-.4 2.100.3l1.900 2.800c.4.6.3 1.400-.2 1.900L5.700 7.800c.5 2.800 2.600 6 5.300 7.600l1.600-1.100c.6-.4 1.400-.4 1.900.1l2.200 2.200c.6.6.6 1.500 0 2.100l-1.100 1c-.9.8-2.200 1-3.300.5C7 17.900 2.200 11.800 1.200 6.100 1 5 1.400 3.800 2.300 3z"/></svg>
<div class="txt cp" style="left:628px;top:687px">Campaha exemplo 8</div>
<div class="txt tc" style="left:1018px;top:686px">0/ 0/ 0/ 0,00%</div>
<div class="abs" style="left:1552px;top:690px;width:6px;height:6px;border-radius:50%;background:#f00000"></div>
<div class="txt st" style="left:1562px;top:687px;color:#f00000">Pausado</div>
<div class="abs" style="left:1627px;top:683px;width:60px;height:19px;border:1px solid #80c9ee"><svg class="abs" style="left:3px;top:4px" width="10" height="10" viewBox="0 0 10 10"><path d="M1 .800L9 5 1 9.200z" fill="#2fa3dc"/></svg><div class="txt pb" style="left:17px;top:4px">Ativar</div></div>
<svg class="abs" style="left:1744px;top:693px" width="8" height="20" viewBox="0 0 8 20"><circle cx="4" cy="3" r="2.300" fill="#111"/><circle cx="4" cy="9.800" r="2.300" fill="#111"/><circle cx="4" cy="16.600" r="2.300" fill="#111"/></svg>
<div class="abs" style="left:85px;top:730px;width:1810px;height:55px;background:#e8e8e8;border-bottom:1px solid #d6d6d6"></div>
<div class="txt idt" style="left:108px;top:741px">155459</div>
<div class="txt dt" style="left:350px;top:739px">20:02<br>09/05/2025</div>
<svg class="abs" style="left:603px;top:738px" width="22" height="22" viewBox="0 0 22 22"><path fill="none" stroke="#4a4a4a" stroke-width="1.500" d="M11 1.800a9 9 0 0 1 0 18 9 9 0 0 1-4.300-1.100L1.600 20.200l1.500-4.900A9 9 0 0 1 11 1.800z"/><path fill="#4a4a4a" d="M7.600 6.300c.4-.3.900-.3 1.100.1l.9 1.800c.2.400.1.800-.2 1.100l-.5.500c.7 1.400 1.800 2.500 3.200 3.200l.5-.5c.3-.3.700-.4 1.100-.2l1.800.9c.4.2.4.700.1 1.100l-.7.800c-.5.500-1.300.700-2 .4C10.700 14.500 8.300 12.100 7.300 9.800c-.3-.7-.1-1.500.4-2z"/></svg>
<div class="txt cp" style="left:632px;top:742px">Campaha exemplo 9</div>
<div class="txt tc" style="left:1018px;top:741px">1/ 1/ 0/ 0,00%</div>
<div class="abs" style="left:1552px;top:745px;width:6px;height:6px;border-radius:50%;background:#008000"></div>
<div class="txt st" style="left:1562px;top:742px;color:#008000">Ativo</div>
<div class="abs" style="left:1627px;top:738px;width:60px;height:19px;border:1px solid #80c9ee"><svg class="abs" style="left:4px;top:4px" width="9" height="10" viewBox="0 0 9 10"><rect x="1" y="0.500" width="2.300" height="9" fill="#2fa3dc"/><rect x="5.200" y="0.500" width="2.300" height="9" fill="#2fa3dc"/></svg><div class="txt pb" style="left:17px;top:4px">Pausar</div></div>
<svg class="abs" style="left:1744px;top:748px" width="8" height="20" viewBox="0 0 8 20"><circle cx="4" cy="3" r="2.300" fill="#111"/><circle cx="4" cy="9.800" r="2.300" fill="#111"/><circle cx="4" cy="16.600" r="2.300" fill="#111"/></svg>
<div class="abs" style="left:85px;top:785px;width:1810px;height:55px;background:#ffffff;border-bottom:1px solid #d6d6d6"></div>
<div class="txt idt" style="left:108px;top:796px">155439</div>
<div class="txt dt" style="left:350px;top:794px">16:28<br>09/05/2025</div>
<svg class="abs" style="left:603px;top:794px" width="22" height="18" viewBox="0 0 22 18"><rect x="1.300" y="1.800" width="19" height="14.500" rx="1.300" fill="none" stroke="#444" stroke-width="2"/><path d="M1.800 2.600l9 7 9-7" fill="none" stroke="#444" stroke-width="1.800"/></svg>
<div class="txt cp" style="left:632px;top:797px">Campaha exemplo 10</div>
<div class="txt tc" style="left:1018px;top:796px">4/ 4/ 2/ 50,00%</div>
<div class="abs" style="left:1552px;top:800px;width:6px;height:6px;border-radius:50%;background:#008000"></div>
<div class="txt st" style="left:1562px;top:797px;color:#008000">Ativo</div>
<div class="abs" style="left:1627px;top:793px;width:60px;height:19px;border:1px solid #80c9ee"><svg class="abs" style="left:4px;top:4px" width="9" height="10" viewBox="0 0 9 10"><rect x="1" y="0.500" width="2.300" height="9" fill="#2fa3dc"/><rect x="5.200" y="0.500" width="2.300" height="9" fill="#2fa3dc"/></svg><div class="txt pb" style="left:17px;top:4px">Pausar</div></div>
<svg class="abs" style="left:1744px;top:803px" width="8" height="20" viewBox="0 0 8 20"><circle cx="4" cy="3" r="2.300" fill="#111"/><circle cx="4" cy="9.800" r="2.300" fill="#111"/><circle cx="4" cy="16.600" r="2.300" fill="#111"/></svg>
<div class="abs" style="left:85px;top:840px;width:1810px;height:49px;background:#d3d3d3"></div>
<div class="abs" style="left:1636px;top:847px;width:19px;height:34px;background:#484848;border-radius:3px"></div>
<div class="txt pg" style="left:1573px;top:856px;color:#777">Anterior</div>
<div class="txt pg" style="left:1641px;top:856px;color:#fff">1</div>
<div class="txt pg" style="left:1662px;top:856px;color:#333">2</div>
<div class="txt pg" style="left:1683px;top:856px;color:#333">3</div>
<div class="txt pg" style="left:1703px;top:856px;color:#333">4</div>
<div class="txt pg" style="left:1724px;top:856px;color:#333">5</div>
<div class="txt pg" style="left:1755px;top:856px;color:#555">…</div>
<div class="txt pg" style="left:1793px;top:856px;color:#333">21</div>
<div class="txt pg" style="left:1823px;top:856px;color:#333">Próximo</div>
<!-- /TABLE -->
</body></html>
